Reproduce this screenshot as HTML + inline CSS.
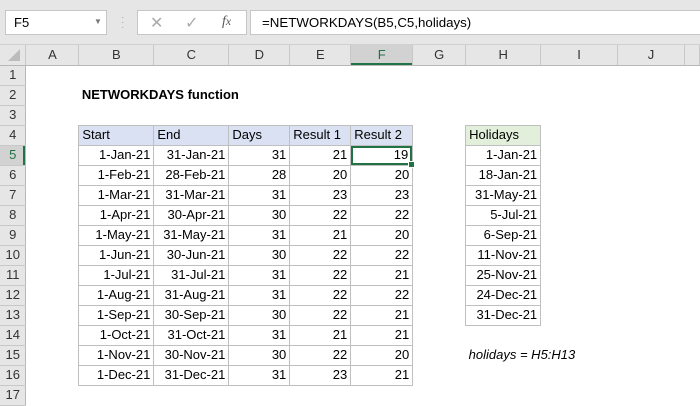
<!DOCTYPE html>
<html><head><style>
body{margin:0;width:700px;height:400px;overflow:hidden;background:#fff;font-family:"Liberation Sans",Arial,sans-serif;font-size:13px;position:relative}
.top{position:absolute;left:0;top:0;width:700px;height:45px;background:#e6e6e6;border-bottom:1px solid #d0d0d0;box-sizing:border-box}
.box{position:absolute;background:#fff;border:1px solid #c6c6c6;box-sizing:border-box}
table{position:absolute;left:0;top:45px;border-collapse:collapse;table-layout:fixed}
td{height:20px;padding:0 3px;box-sizing:border-box;white-space:nowrap;overflow:hidden;line-height:18px}
.ch{background:#e6e6e6;border-right:1px solid #c8c8c8;border-bottom:1px solid #b8b8b8;text-align:center;color:#333;padding:0}
.rh{background:#e6e6e6;border-right:1px solid #b8b8b8;border-bottom:1px solid #c8c8c8;text-align:center;color:#333;padding:0}
.b{border:1px solid #bfbfbf;text-align:right}
.hd{background:#d9e1f2;text-align:left}
.hg{background:#e2efda;text-align:left}
</style></head><body>
<div class="top">
<div class="box" style="left:5px;top:10px;width:102px;height:25px"><span style="position:absolute;left:8px;top:4px;font-size:13px">F5</span><span style="position:absolute;left:88px;top:6px;font-size:8px;color:#777">▼</span></div>
<div style="position:absolute;left:121px;top:15px;color:#aaa;font-size:10px;line-height:5px">·<br>·<br>·</div>
<div class="box" style="left:137px;top:10px;width:110px;height:25px"><span style="position:absolute;left:12px;top:2px;color:#aaa;font-size:16px">✕</span><span style="position:absolute;left:47px;top:2px;color:#aaa;font-size:16px">✓</span><span style="position:absolute;left:84px;top:3px;font-style:italic;font-family:'Liberation Serif',serif;font-size:14px;color:#555">f<small>x</small></span></div>
<div class="box" style="left:250px;top:10px;width:460px;height:25px"><span style="position:absolute;left:11px;top:4px;font-size:13.3px">=NETWORKDAYS(B5,C5,holidays)</span></div>
</div>
<table>
<colgroup><col style="width:26px"><col style="width:53px"><col style="width:75px"><col style="width:75px"><col style="width:61px"><col style="width:61px"><col style="width:62px"><col style="width:53px"><col style="width:75px"><col style="width:77px"><col style="width:67px"><col style="width:15px"></colgroup>
<tr><td class="ch" style="background:#e6e6e6;position:relative"><svg width="20" height="16" style="position:absolute;left:2px;top:1px"><polygon points="18,3 18,15 6,15" fill="#bcbcbc"/></svg></td><td class="ch">A</td><td class="ch">B</td><td class="ch">C</td><td class="ch">D</td><td class="ch">E</td><td class="ch" style="background:#d2d2d2;box-shadow:inset 0 -2px 0 #217346;color:#217346">F</td><td class="ch">G</td><td class="ch">H</td><td class="ch">I</td><td class="ch">J</td><td class="ch"></td></tr>
<tr><td class="rh">1</td><td colspan="11"></td></tr>
<tr><td class="rh">2</td><td></td><td colspan="4" style="font-weight:bold">NETWORKDAYS function</td><td colspan="6"></td></tr>
<tr><td class="rh">3</td><td colspan="11"></td></tr>
<tr><td class="rh">4</td><td></td><td class="b hd">Start</td><td class="b hd">End</td><td class="b hd">Days</td><td class="b hd">Result 1</td><td class="b hd">Result 2</td><td></td><td class="b hg">Holidays</td><td colspan="3"></td></tr>
<tr><td class="rh" style="background:#d2d2d2;box-shadow:inset -2px 0 0 #217346;color:#217346">5</td><td></td><td class="b">1-Jan-21</td><td class="b">31-Jan-21</td><td class="b">31</td><td class="b">21</td><td class="b" style="box-shadow:inset 0 0 0 2px #217346;overflow:visible;position:relative;padding-right:4px">19<span style="position:absolute;right:-3px;bottom:-3px;width:5px;height:5px;background:#217346;border:1px solid #fff"></span></td><td></td><td class="b">1-Jan-21</td><td colspan="3"></td></tr>
<tr><td class="rh">6</td><td></td><td class="b">1-Feb-21</td><td class="b">28-Feb-21</td><td class="b">28</td><td class="b">20</td><td class="b">20</td><td></td><td class="b">18-Jan-21</td><td colspan="3"></td></tr>
<tr><td class="rh">7</td><td></td><td class="b">1-Mar-21</td><td class="b">31-Mar-21</td><td class="b">31</td><td class="b">23</td><td class="b">23</td><td></td><td class="b">31-May-21</td><td colspan="3"></td></tr>
<tr><td class="rh">8</td><td></td><td class="b">1-Apr-21</td><td class="b">30-Apr-21</td><td class="b">30</td><td class="b">22</td><td class="b">22</td><td></td><td class="b">5-Jul-21</td><td colspan="3"></td></tr>
<tr><td class="rh">9</td><td></td><td class="b">1-May-21</td><td class="b">31-May-21</td><td class="b">31</td><td class="b">21</td><td class="b">20</td><td></td><td class="b">6-Sep-21</td><td colspan="3"></td></tr>
<tr><td class="rh">10</td><td></td><td class="b">1-Jun-21</td><td class="b">30-Jun-21</td><td class="b">30</td><td class="b">22</td><td class="b">22</td><td></td><td class="b">11-Nov-21</td><td colspan="3"></td></tr>
<tr><td class="rh">11</td><td></td><td class="b">1-Jul-21</td><td class="b">31-Jul-21</td><td class="b">31</td><td class="b">22</td><td class="b">21</td><td></td><td class="b">25-Nov-21</td><td colspan="3"></td></tr>
<tr><td class="rh">12</td><td></td><td class="b">1-Aug-21</td><td class="b">31-Aug-21</td><td class="b">31</td><td class="b">22</td><td class="b">22</td><td></td><td class="b">24-Dec-21</td><td colspan="3"></td></tr>
<tr><td class="rh">13</td><td></td><td class="b">1-Sep-21</td><td class="b">30-Sep-21</td><td class="b">30</td><td class="b">22</td><td class="b">21</td><td></td><td class="b">31-Dec-21</td><td colspan="3"></td></tr>
<tr><td class="rh">14</td><td></td><td class="b">1-Oct-21</td><td class="b">31-Oct-21</td><td class="b">31</td><td class="b">21</td><td class="b">21</td><td colspan="5"></td></tr>
<tr><td class="rh">15</td><td></td><td class="b">1-Nov-21</td><td class="b">30-Nov-21</td><td class="b">30</td><td class="b">22</td><td class="b">20</td><td></td><td colspan="4" style="font-style:italic">holidays = H5:H13</td></tr>
<tr><td class="rh">16</td><td></td><td class="b">1-Dec-21</td><td class="b">31-Dec-21</td><td class="b">31</td><td class="b">23</td><td class="b">21</td><td colspan="5"></td></tr>
<tr><td class="rh">17</td><td colspan="11"></td></tr>
</table>
</body></html>
